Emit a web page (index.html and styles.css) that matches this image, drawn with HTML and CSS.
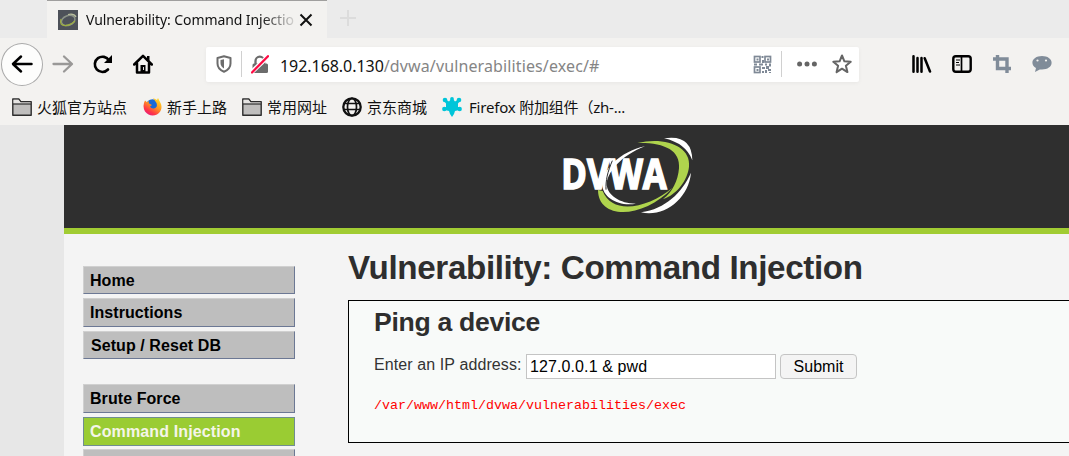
FILE: index.html
```html
<!DOCTYPE html>
<html lang="zh-CN">
<head>
<meta charset="utf-8">
<title>Vulnerability: Command Injection</title>
<link rel="stylesheet" href="styles.css">
</head>
<body>
<div class="tabs">
  <div class="tab">
    <svg class="favicon" width="20" height="20" viewBox="0 0 20 20"><rect width="20" height="20" fill="#4d5159"/><ellipse cx="10" cy="10.5" rx="7" ry="4.800" transform="rotate(-20 10 10)" fill="none" stroke="#8b9288" stroke-width="1.500"/><path d="M3 9Q1 16 8 15.500Q13 15 17 11" fill="none" stroke="#9dae42" stroke-width="1.300"/><path d="M10 4.500Q16 3 18 7" fill="none" stroke="#b9bf9e" stroke-width="1.200"/></svg>
    <span class="tab-title">Vulnerability: Command Injectio</span>
    <svg class="close" width="14" height="14" viewBox="0 0 14 14"><path d="M1.500 1.500l11 11M12.500 1.500l-11 11" stroke="#111" stroke-width="2"/></svg>
  </div>
  <svg class="plus" width="16" height="16" viewBox="0 0 16 16"><path d="M8 0v16M0 8h16" stroke="#dcdcdc" stroke-width="2"/></svg>
</div>
<div class="toolbar">
  <div class="back"><svg width="22" height="20" viewBox="0 0 22 20"><path d="M20.500 10H2.500M10 2.500L2 10l8 7.500" fill="none" stroke="#000" stroke-width="2.500" stroke-linecap="round" stroke-linejoin="round"/></svg></div>
  <svg class="forward" width="22" height="20" viewBox="0 0 22 20"><path d="M1.500 10h18M12 2.500l8 7.500-8 7.500" fill="none" stroke="#999897" stroke-width="2.300" stroke-linecap="round" stroke-linejoin="round"/></svg>
  <svg class="reload" width="20" height="20" viewBox="0 0 20 20"><path d="M15 15.500A7.600 7.600 0 1 1 16 6.500" fill="none" stroke="#000" stroke-width="2.600" stroke-linecap="round"/><path d="M19 1v8h-8z"/></svg>
  <svg class="home" width="20" height="20" viewBox="0 0 20 20"><path d="M1.200 10.500L10 1.800l8.800 8.700M4 9.500v9h12v-9" fill="none" stroke="#000" stroke-width="2.500" stroke-linecap="round" stroke-linejoin="round"/><path d="M14 2h2.500v5L14 5zM7.500 11h5v8h-5z"/><path d="M10 13h1v3h-1z" fill="#ddd"/></svg>
  <div class="urlbar">
    <svg class="shield" width="16" height="18" viewBox="0 0 16 18"><path d="M8 1.300L14.500 3v5.500C14.500 13 11 15.500 8 16.700 5 15.500 1.500 13 1.500 8.500V3z" fill="none" stroke="#6c6c6c" stroke-width="2" stroke-linejoin="round"/><path d="M8 4.200v9.300C6 12.500 4.500 10.500 4.500 8V5z" fill="#6c6c6c"/></svg>
    <i class="rule"></i>
    <svg class="lock" width="18" height="19" viewBox="0 0 18 19"><path d="M4.500 9V6a4.300 4.300 0 0 1 8.600 0v3" fill="none" stroke="#6c6c6c" stroke-width="2.300"/><rect x="1.500" y="8.500" width="15.500" height="9.500" rx="1.500" fill="#6c6c6c"/><path d="M.7 17L17.500 1" stroke="#fff" stroke-width="4.600"/><path d="M1 17.500L17 1.200" stroke="#ff0a43" stroke-width="2.300" stroke-linecap="round"/></svg>
    <span class="url"><b>192.168.0.130</b><span class="path">/dvwa/vulnerabilities/exec/#</span></span>
    <svg class="qr" width="19" height="19" viewBox="0 0 19 19"><g fill="none" stroke="#7f8996" stroke-width="1.700"><rect x="1.500" y="1.500" width="5.500" height="5.500"/><rect x="12" y="1.500" width="5.500" height="5.500"/><rect x="1.500" y="12" width="5.500" height="5.500"/></g><path d="M3.500 3.500h2v2h-2zM14 3.500h2v2h-2zM3.500 14h2v2h-2zM8.500 1h2v2h-2zM9 5h2v3h-2zM1 8.500h3v2H1zM6 8.500h4v2H6zM12 8.500h2v2h-2zM16 8.500h2v3h-2zM9 12h3v2H9zM13 11h3v3h-3zM9 16h2v2H9zM12 15h2v3h-2zM15 14h3v2h-3zM16 17h2v1h-2z" fill="#7f8996"/></svg>
    <i class="rule rule-right"></i>
    <svg class="dots" width="20" height="6" viewBox="0 0 20 6"><g fill="#656565"><circle cx="2.600" cy="3" r="2.500"/><circle cx="10" cy="3" r="2.500"/><circle cx="17.400" cy="3" r="2.500"/></g></svg>
    <svg class="star" width="20" height="20" viewBox="0 0 20 20"><path d="M10 1.500l2.400 5.800 6.300.5-4.800 4 1.500 6.300-5.400-3.400-5.400 3.400 1.500-6.300-4.800-4 6.300-.5z" fill="none" stroke="#656565" stroke-width="2" stroke-linejoin="round"/></svg>
  </div>
  <svg class="library" width="20" height="18" viewBox="0 0 20 18"><path d="M1.500 1.300v15.400M5.500 3v13.700M9.500 3v13.700M12.700 3.200L18 16.500" stroke="#000" stroke-width="2.500" stroke-linecap="round"/></svg>
  <svg class="sidebar" width="20" height="18" viewBox="0 0 20 18"><rect x="1.300" y="1.300" width="17.400" height="15.400" rx="2.500" fill="none" stroke="#000" stroke-width="2.400"/><path d="M9.500 2v14" stroke="#000" stroke-width="1.700"/><path d="M4 5h4M4 7.500h3M4 10h4" stroke="#000" stroke-width="1"/></svg>
  <svg class="crop" width="18" height="18" viewBox="0 0 18 18"><path d="M0 4h14v10.500M4.500 0v13.500H18M14 13v5" fill="none" stroke="#808c99" stroke-width="3.400"/></svg>
  <svg class="chat" width="20" height="18" viewBox="0 0 20 18"><path d="M10 1c5.500 0 9.600 2.800 9.600 6.800 0 4-4.100 6.700-9.600 6.700-.8 0-1.500 0-2.200-.1L3 17l1-3.900C1.700 12 .4 10 .4 7.800.4 3.800 4.500 1 10 1z" fill="#808c99"/><circle cx="5.500" cy="5.500" r="1.100" fill="#f3f2f0"/><circle cx="14" cy="5.500" r="1.100" fill="#f3f2f0"/></svg>
</div>
<div class="bookmarks">
  <div class="mark m1"><svg width="20" height="18" viewBox="0 0 20 18"><path d="M.8 1h6l2 2.700h10.400v13.500H.8z" fill="#bfbebd" stroke="#2d2d2d" stroke-width="1.400" stroke-linejoin="round"/><path d="M1.500 1.800h5l2 2.700h10v1.300h-17z" fill="#e5e4e2"/><path d="M1 6h18" stroke="#2d2d2d" stroke-width="1.200"/></svg><span>火狐官方站点</span></div>
  <div class="mark m2"><svg width="19" height="19" viewBox="0 0 19 19"><defs><linearGradient id="fox" x1=".85" y1="0" x2=".2" y2="1"><stop offset="0" stop-color="#ffe326"/><stop offset=".45" stop-color="#ff9322"/><stop offset=".75" stop-color="#ff3845"/><stop offset="1" stop-color="#e31586"/></linearGradient></defs><circle cx="9.500" cy="8.700" r="6.500" fill="#1769d8"/><path d="M2 3.500l2 1.700 2-1.200-.3 2.300L9 8 7 9.500q1 2.500 4 2 4-1 2.500-5.500L10 1l4 2 1-2 3 6q2 7-4 10.500-7 3-12-3Q-1 9 2 3.500z" fill="url(#fox)"/></svg><span>新手上路</span></div>
  <div class="mark m3"><svg width="20" height="18" viewBox="0 0 20 18"><path d="M.8 1h6l2 2.700h10.400v13.500H.8z" fill="#bfbebd" stroke="#2d2d2d" stroke-width="1.400" stroke-linejoin="round"/><path d="M1.500 1.800h5l2 2.700h10v1.300h-17z" fill="#e5e4e2"/><path d="M1 6h18" stroke="#2d2d2d" stroke-width="1.200"/></svg><span>常用网址</span></div>
  <div class="mark m4"><svg width="20" height="20" viewBox="0 0 20 20"><g fill="none" stroke="#111"><circle cx="10" cy="10" r="8.700" stroke-width="2.300"/><ellipse cx="10" cy="10" rx="4.500" ry="8.700" stroke-width="1.700"/><path d="M2.500 6.500h15M1.500 12.500h17" stroke-width="1.700"/></g></svg><span>京东商城</span></div>
  <div class="mark m5"><svg width="20" height="20" viewBox="0 0 20 20"><g fill="#00c5d9"><circle cx="3" cy="3" r="2.300"/><circle cx="17" cy="3" r="2.300"/><circle cx="2.300" cy="12" r="2.200"/><circle cx="17.700" cy="12" r="2.200"/><circle cx="10" cy="2" r="1.900"/><path d="M3 2l4 2.500L9 2h2l2 2.500L17 2l1 2-2 2.500V10l2 1-.5 2-4.500 1-1 3-2 3-2-3-1-3-4.500-1L2 11l2-1V6.500L2 4z"/></g></svg><span>Firefox 附加组件（zh-...</span></div>
</div>
<div class="page">
  <div class="header">
    <svg width="180" height="103" viewBox="0 0 540 309">
      <g fill="#fff">
        <path d="M372 40Q456 27 457 106Q437 54 372 40z"/>
        <path d="M453 143C446 220 374 278 303 262C377 251 425 204 453 143z"/>
        <path d="M315 64C240 78 184 140 187 180C188 218 238 246 288 236C239 236 203 210 200 180C199 145 243 91 315 64z"/>
      </g>
      <path d="M292 54C375 34 454 64 447 125C443 165 411 209 369 222C398 202 414 166 417 130C422 75 372 52 292 54z" fill="#afd44d"/>
      <path d="M174 195C175 287 311 281 398 188C325 248 218 273 188 198z" fill="#afd44d"/>
      <text class="logo-text" x="64" y="193" textLength="316" lengthAdjust="spacingAndGlyphs">DVWA</text>
      <path d="M217 107C202 142 197 167 198 194" fill="none" stroke="#2f2f2f" stroke-width="3"/>
    </svg>
  </div>
  <div class="content">
    <div class="menu">
      <div class="item">Home</div><div class="item tall">Instructions</div><div class="item setup">Setup / Reset DB</div>
      <div class="item tall group">Brute Force</div><div class="item tall active">Command Injection</div><div class="item"></div>
    </div>
    <div class="main">
      <h1>Vulnerability: Command Injection</h1>
      <div class="panel">
        <h2>Ping a device</h2>
        <div class="form"><label for="ip">Enter an IP address:</label><input id="ip" type="text" value="127.0.0.1 &amp; pwd"><button>Submit</button></div>
        <pre>/var/www/html/dvwa/vulnerabilities/exec</pre>
      </div>
    </div>
  </div>
</div>
</body>
</html>
```

FILE: styles.css
```css
* { box-sizing: border-box; }
body { margin: 0; width: 1069px; height: 456px; overflow: hidden; background: #e7e7e7; font-family: "Liberation Sans", Arial, sans-serif; }
svg { display: block; flex: none; }
.tabs { display: flex; height: 38px; background: #ebebeb; padding-left: 47px; font-family: "Noto Sans", sans-serif; }
.tab { display: flex; align-items: center; width: 280px; height: 38px; border-top: 1px solid #a09f9e; background: #f3f2f0; padding: 0 13px 0 11px; }
.favicon { width: 20px; }
.tab-title { width: 208px; margin-left: 8px; white-space: nowrap; font-size: 14px; letter-spacing: -.08px; color: #111; mask-image: linear-gradient(90deg, #000 84%, #0002); }
.close { margin-left: 5px; }
.plus { margin: 10px 0 0 13px; }
.toolbar { display: flex; align-items: center; height: 52px; background: #f3f2f0; }
.back { display: flex; align-items: center; justify-content: center; width: 42px; height: 43px; margin-left: 1px; border: 1px solid #aaa; border-radius: 50%; background: #fdfdfc; }
.forward { margin-left: 9px; }
.reload { margin-left: 19px; }
.home { margin-left: 20px; }
.urlbar { display: flex; align-items: center; width: 653px; height: 35px; margin-left: 53px; padding-left: 10px; border-radius: 2px; background: #fff; box-shadow: 0 1px 4px #0000000d; }
.rule { width: 1px; height: 26px; margin-left: 9px; background: #d0d0d0; }
.lock { margin-left: 9px; }
.url { width: 470px; margin: 3px 0 0 11px; font: 16px "Noto Sans", sans-serif; white-space: nowrap; color: #111; }
.url b { font-weight: 400; letter-spacing: -.05px; }
.path { color: #858585; letter-spacing: .12px; }
.qr { margin-left: 3px; }
.rule-right { margin-left: 9px; }
.dots { margin-left: 15px; }
.star { margin-left: 15px; }
.library { margin-left: 53px; }
.sidebar { margin-left: 20px; }
.crop { margin-left: 21px; }
.chat { margin-left: 21px; }
.bookmarks { display: flex; height: 35px; background: #f3f2f0; font: 15px "Noto Sans", "Noto Sans CJK SC", sans-serif; color: #111; }
.mark { display: flex; align-items: center; gap: 5px; height: 33px; white-space: nowrap; }
.m1 { width: 131px; margin-left: 12px; }
.m2 { width: 99px; }
.m3 { width: 100px; }
.m4 { width: 100px; }
.m5 { gap: 7px; letter-spacing: -.2px; }
.page { width: 1005px; height: 331px; margin-left: 64px; background: #f4f4f4; }
.header { height: 109px; padding-left: 476px; border-bottom: 6px solid #a1cc33; background: #2f2f2f; }
.logo-text { font: 700 122px "Open Sans", sans-serif; fill: #fff; stroke: #fff; stroke-width: 5px; }
.content { display: flex; height: 222px; }
.menu { width: 231px; padding: 32px 0 0 19px; }
.item { height: 28px; margin-bottom: 4px; padding-left: 6px; border: 1px solid #d0d0d0; border-right-color: #6c7894; border-bottom-color: #6c7894; background: #bebebe; font-size: 16px; font-weight: 700; line-height: 27px; letter-spacing: .07px; color: #000; }
.tall { height: 29px; }
.setup { padding-left: 7px; }
.group { margin-top: 25px; line-height: 28px; }
.active { border-color: #708d91; background: #9acc33; color: #f5f5e9; letter-spacing: .13px; margin-bottom: 3px; }
.main { flex: 1; margin-left: 53px; }
h1 { margin: 14px 0 0; font-size: 33.2px; line-height: 40px; letter-spacing: -.36px; color: #2e2e2e; }
.panel { height: 143px; margin-top: 12px; padding: 6px 0 0 25px; border: 1px solid #000; border-right: 0; background: #f8faf9; color: #333; }
h2 { margin: 0; font-size: 26.6px; line-height: 31px; letter-spacing: -.3px; color: #2e2e2e; }
.form { display: flex; height: 26px; margin-top: 16px; font-size: 16px; }
label { width: 152px; padding-top: 2px; letter-spacing: .1px; }
input, button { height: 25px; border: 1px solid #c4c4c4; color: #000; font: 16px "Liberation Sans", Arial, sans-serif; }
input { width: 250px; padding: 0 3px; letter-spacing: .1px; background: #fff; }
button { width: 77px; margin-left: 4px; padding: 0; border-radius: 4px; background: #f4f4f4; }
pre { margin: 16px 0 0; font: 13.33px/20px "Liberation Mono", monospace; color: #f00; }
```
